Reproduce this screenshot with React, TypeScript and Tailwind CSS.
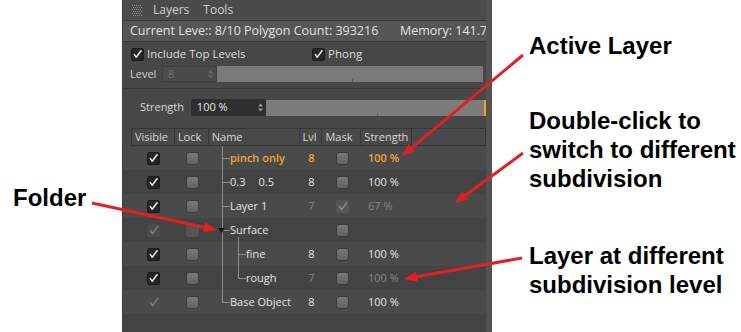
import React from "react";

const UI = "font-['Open_Sans','DejaVu_Sans',sans-serif]";
const NOTE = "font-['Liberation_Sans',Arial,sans-serif] font-bold text-[24px] leading-[29px] text-black";

const Check = ({ color = "#e6e6e6" }: { color?: string }) => (
  <svg width="12" height="12" viewBox="0 0 12 12">
    <path d="M2.6 6.6 L4.6 9.6 L9.8 2.4" fill="none" stroke={color} strokeWidth="1.6" strokeLinecap="round" strokeLinejoin="round" />
  </svg>
);

const DarkBox = ({ dim = false }: { dim?: boolean }) => (
  <div
    className={
      dim
        ? "w-[13px] h-[13px] rounded-[2px] bg-[#4c4c4c] flex items-center justify-center"
        : "w-[13px] h-[13px] rounded-[2px] bg-[#262626] border border-[#1c1c1c] flex items-center justify-center"
    }
  >
    <Check color={dim ? "#7a7a7a" : "#e8e8e8"} />
  </div>
);

const GrayBox = ({ checked = false, dim = false }: { checked?: boolean; dim?: boolean }) => (
  <div
    className={
      dim || checked
        ? "w-[13px] h-[13px] rounded-[3px] bg-[#555555] flex items-center justify-center"
        : "w-[13px] h-[13px] rounded-[3px] bg-gradient-to-b from-[#7a7a7a] to-[#626262] border border-[#3c3c3c]"
    }
  >
    {checked && <Check color="#8a8a8a" />}
  </div>
);

type Row = {
  name: React.ReactNode;
  depth: number;
  lvl?: string;
  lvlDim?: boolean;
  strength?: string;
  strDim?: boolean;
  active?: boolean;
  visDim?: boolean;
  lockDim?: boolean;
  maskChecked?: boolean;
  folder?: boolean;
  main: "full" | "top";
  sub?: "bottom" | "full" | "top";
};

const rows: Row[] = [
  { name: "pinch only", depth: 0, lvl: "8", strength: "100 %", active: true, main: "full" },
  {
    name: (
      <>
        0.3<span className="ml-[13px]">0.5</span>
      </>
    ),
    depth: 0,
    lvl: "8",
    strength: "100 %",
    main: "full",
  },
  { name: "Layer 1", depth: 0, lvl: "7", lvlDim: true, strength: "67 %", strDim: true, maskChecked: true, main: "full" },
  { name: "Surface", depth: 0, visDim: true, lockDim: true, folder: true, main: "full", sub: "bottom" },
  { name: "fine", depth: 1, lvl: "8", strength: "100 %", main: "full", sub: "full" },
  { name: "rough", depth: 1, lvl: "7", lvlDim: true, strength: "100 %", strDim: true, main: "full", sub: "top" },
  { name: "Base Object", depth: 0, lvl: "8", strength: "100 %", visDim: true, main: "top" },
];

const cols = ["w-[43px]", "w-[34px]", "w-[91px]", "w-[23px]", "w-[39px]", "w-[51px]", "w-[74px]"];

const TreeCell = ({ r }: { r: Row }) => {
  const line = "bg-[#8c8c8c]";
  return (
    <div className={`${cols[2]} h-full relative flex items-center`}>
      <div className={`absolute left-[13px] w-px ${line} ${r.main === "full" ? "top-0 bottom-0" : "top-0 h-[12px]"}`} />
      {r.sub && (
        <div
          className={`absolute left-[29px] w-px ${line} ${
            r.sub === "full" ? "top-0 bottom-0" : r.sub === "top" ? "top-0 h-[12px]" : "top-[19px] bottom-0"
          }`}
        />
      )}
      <div className={`absolute top-[12px] h-px w-[8px] ${line} ${r.depth ? "left-[29px]" : "left-[13px]"}`} />
      {r.folder && (
        <svg className="absolute left-[9px] top-[10px]" width="7" height="5" viewBox="0 0 7 5">
          <path d="M0 0 H7 L3.5 5 Z" fill="#111" />
        </svg>
      )}
      <span
        className={`${r.depth ? "ml-[37px]" : "ml-[21px]"} whitespace-nowrap ${
          r.active ? "text-[#f2a53a] font-semibold" : "text-[#e4e4e4]"
        }`}
      >
        {r.name}
      </span>
    </div>
  );
};

const Table = () => (
  <div className="mt-[12px] shrink-0 flex flex-col">
    <div className="ml-[8px] shrink-0 flex h-[18px] border-t border-b border-l border-[#363636] bg-[#494949] text-[#d6d6d6]">
      {["Visible", "Lock", "Name", "Lvl", "Mask", "Strength", ""].map((h, i) => (
        <div key={i} className={`${cols[i]} border-r border-[#363636] pl-[3px] leading-[16px]`}>
          {h}
        </div>
      ))}
    </div>
    {rows.map((r, i) => (
      <div key={i} className={`h-[24px] shrink-0 flex pl-[9px] ${i % 2 === 0 ? "bg-[#4a4a4a]" : "bg-[#434343]"}`}>
        <div className={`${cols[0]} flex items-center justify-center`}>
          <DarkBox dim={r.visDim} />
        </div>
        <div className={`${cols[1]} flex items-center justify-center`}>
          <GrayBox dim={r.lockDim} />
        </div>
        <TreeCell r={r} />
        <div
          className={`${cols[3]} flex items-center justify-center ${
            r.active ? "text-[#f2a53a] font-semibold" : r.lvlDim ? "text-[#858585]" : "text-[#e4e4e4]"
          }`}
        >
          {r.lvl}
        </div>
        <div className={`${cols[4]} flex items-center justify-center`}>
          <GrayBox checked={r.maskChecked} />
        </div>
        <div
          className={`${cols[5]} flex items-center pl-[6px] whitespace-nowrap ${
            r.active ? "text-[#f2a53a] font-semibold" : r.strDim ? "text-[#858585]" : "text-[#e4e4e4]"
          }`}
        >
          {r.strength}
        </div>
      </div>
    ))}
    <div className="h-[24px] shrink-0 bg-[#434343]" />
  </div>
);

const Spinner = ({ color }: { color: string }) => (
  <svg width="5" height="9" viewBox="0 0 5 9">
    <path d="M0 3.5 L2.5 0.5 L5 3.5 Z M0 5.5 L2.5 8.5 L5 5.5 Z" fill={color} />
  </svg>
);

const Grip = () => (
  <svg width="11" height="11" viewBox="0 0 11 11">
    {Array.from({ length: 30 }).map((_, k) => {
      const x = (k % 5) * 2 + (Math.floor(k / 5) % 2 ? 1 : 0);
      const y = Math.floor(k / 5) * 2;
      return <rect key={k} x={x} y={y} width="1" height="1" fill="#8a8a8a" />;
    })}
  </svg>
);

const Panel = () => (
  <div className={`w-[370px] h-[332px] shrink-0 bg-[#474747] border-l border-[#3c3c3c] border-r-[6px] border-r-[#525252] overflow-hidden flex flex-col text-[11px] ${UI}`}>
    <div className="h-[21px] shrink-0 bg-[#4b4b4b] border-b border-[#383838] flex items-center pl-[9px] text-[#cfcfcf] text-[12px]">
      <Grip />
      <span className="ml-[10px]">Layers</span>
      <span className="ml-[14px]">Tools</span>
    </div>
    <div className="h-[21px] shrink-0 bg-[#565656] border-b border-[#383838] flex items-center pl-[7px] text-[#e2e2e2] text-[12.5px] whitespace-nowrap overflow-hidden">
      <span className="w-[270px] shrink-0">Current Leve:: 8/10 Polygon Count: 393216</span>
      <span className="shrink-0">Memory: 141.73</span>
    </div>
    <div className="h-[47px] shrink-0 border-b border-[#393939] flex flex-col text-[#dcdcdc]">
      <div className="mt-[4px] h-[16px] shrink-0 flex items-center pl-[8px] text-[11.5px]">
        <DarkBox />
        <span className="ml-[3px] w-[165px]">Include Top Levels</span>
        <DarkBox />
        <span className="ml-[3px]">Phong</span>
      </div>
      <div className="mt-[4px] h-[16px] shrink-0 flex items-center pl-[7px]">
        <span className="w-[32px] text-[#cfcfcf]">Level</span>
        <div className="w-[55px] h-[16px] bg-[#4b4b4b] border border-[#3e3e3e] rounded-[2px] flex items-center justify-between pl-[5px] pr-[3px]">
          <span className="text-[#727272]">8</span>
          <Spinner color="#6a6a6a" />
        </div>
        <div className="w-[266px] h-[16px] bg-[#7a7a7a] relative">
          <div className="absolute left-[135px] bottom-0 w-px h-[3px] bg-[#5a5a5a]" />
        </div>
      </div>
    </div>
    <div className="mt-[10px] h-[17px] shrink-0 flex items-center pl-[17px]">
      <span className="w-[51px] text-[#d8d8d8]">Strength</span>
      <div className="w-[75px] h-[17px] bg-[#2f2f2f] rounded-[2px] flex items-center justify-between pl-[6px] pr-[3px] text-[#e6e6e6]">
        <span>100 %</span>
        <Spinner color="#9a9a9a" />
      </div>
      <div className="w-[221px] h-[16px] bg-[#7c7c7c] border-r-2 border-[#e9a42a] relative">
        <div className="absolute left-[111px] bottom-0 w-px h-[3px] bg-[#5c5c5c]" />
      </div>
    </div>
    <Table />
  </div>
);

const arrows: [number, number, number, number][] = [
  [523, 55, 402, 156],
  [523, 153, 455, 203],
  [92, 203, 217, 230],
  [522, 258, 404, 279],
];

const Arrows = () => (
  <svg className="absolute inset-0 pointer-events-none" width="741" height="332">
    {arrows.map(([x1, y1, x2, y2], i) => {
      const len = Math.hypot(x2 - x1, y2 - y1);
      const ux = (x2 - x1) / len;
      const uy = (y2 - y1) / len;
      const bx = x2 - ux * 13;
      const by = y2 - uy * 13;
      const pts = `${x2},${y2} ${bx - uy * 5},${by + ux * 5} ${bx + uy * 5},${by - ux * 5}`;
      return (
        <g key={i}>
          <line x1={x1} y1={y1} x2={bx + ux * 2} y2={by + uy * 2} stroke="#e41e26" strokeWidth="3" />
          <polygon points={pts} fill="#e41e26" />
        </g>
      );
    })}
  </svg>
);

export default function App() {
  return (
    <div className="w-[741px] h-[332px] bg-white relative overflow-hidden flex">
      <div className="w-[122px] shrink-0 pl-[13px] pt-[183px]">
        <div className={NOTE}>Folder</div>
      </div>
      <Panel />
      <div className="flex-1 pl-[37px] flex flex-col whitespace-nowrap">
        <div className={`${NOTE} mt-[31px]`}>Active Layer</div>
        <div className={`${NOTE} mt-[46px]`}>
          Double-click to
          <br />
          switch to different
          <br />
          subdivision
        </div>
        <div className={`${NOTE} mt-[48px]`}>
          Layer at different
          <br />
          subdivision level
        </div>
      </div>
      <Arrows />
    </div>
  );
}
